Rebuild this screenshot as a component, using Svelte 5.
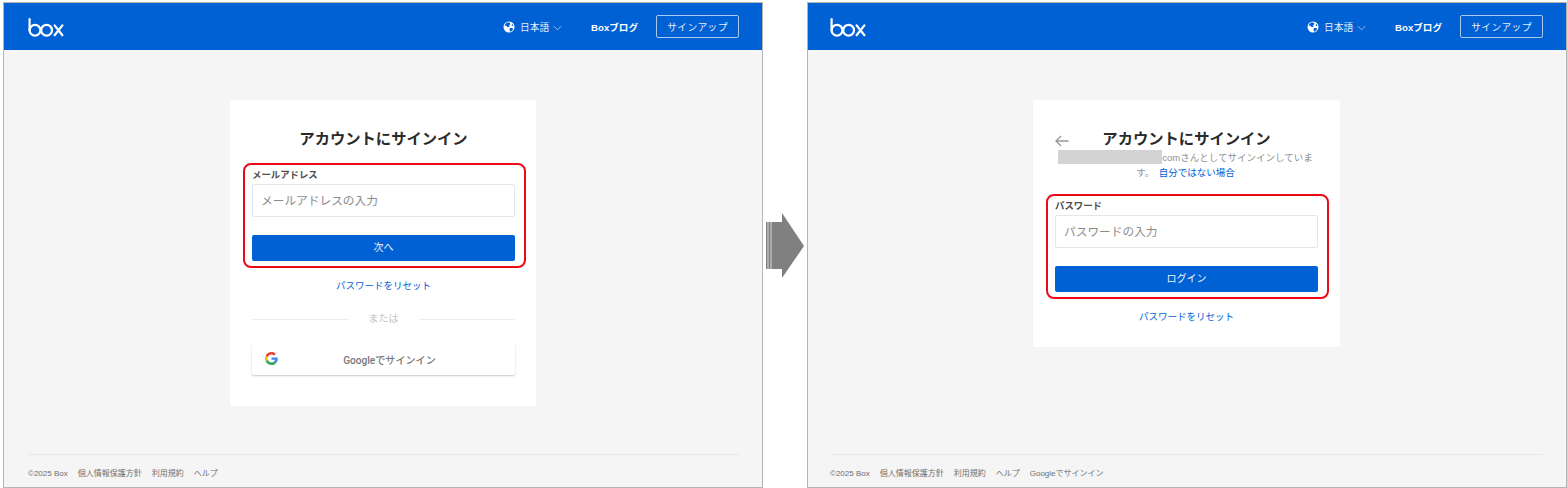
<script>
  const footerBase = ['個人情報保護方針', '利用規約', 'ヘルプ'];
</script>

{#snippet header()}
  <header class="top">
    <svg class="logo" viewBox="0 0 36 19" width="36" height="19" aria-label="box">
      <g fill="none" stroke="#fff" stroke-width="2.2" stroke-linecap="round">
        <path d="M1.6 1.2 V12.4" />
        <circle cx="7" cy="12.2" r="5.4" />
        <circle cx="18.6" cy="12.2" r="5.4" />
        <path d="M26.6 7.4 L34.4 17.2 M34.4 7.4 L26.6 17.2" />
      </g>
    </svg>
    <nav class="top-nav">
      <span class="lang">
        <svg class="globe" viewBox="0 0 24 24" width="12" height="12">
          <circle cx="12" cy="12" r="11" fill="#fff" />
          <path d="M8 3 L13 3 L15 6 L12 9 L13 12 L9 12 L6 9 L3 10 Q4 5 8 3 Z M14 14 L19 14 L20 17 L16 21 L14 21 L13 17 Z M19 6 L21 9 L18 10 L17 8 Z" fill="#0061d5" />
        </svg>
        日本語
        <svg class="chev" viewBox="0 0 10 6" width="9" height="6">
          <path d="M1 1 L5 5 L9 1" fill="none" stroke="#b8d2f2" stroke-width="0.9" />
        </svg>
      </span>
      <span class="blog">Boxブログ</span>
      <span class="signup">サインアップ</span>
    </nav>
  </header>
{/snippet}

{#snippet footer(extra)}
  <footer class="foot">
    <div class="foot-row">
      <span class="copy">©2025 Box</span>
      {#each footerBase as item}
        <span>{item}</span>
      {/each}
      {#if extra}
        <span>{extra}</span>
      {/if}
    </div>
  </footer>
{/snippet}

<div class="page">
  <section class="win">
    {@render header()}
    <main class="stage">
      <div class="card card-tall">
        <h1>アカウントにサインイン</h1>
        <div class="form">
          <span class="mark"></span>
          <label for="mail">メールアドレス</label>
          <input id="mail" type="text" placeholder="メールアドレスの入力" />
          <button class="primary">次へ</button>
        </div>
        <a class="reset" href="#top">パスワードをリセット</a>
        <div class="or"><span>または</span></div>
        <button class="google">
          <svg viewBox="0 0 48 48" width="13" height="13">
            <path fill="#EA4335" d="M24 9.5c3.5 0 6.7 1.2 9.2 3.6l6.9-6.9C35.9 2.4 30.5 0 24 0 14.6 0 6.5 5.4 2.6 13.2l8 6.2C12.5 13.7 17.8 9.5 24 9.5z" />
            <path fill="#4285F4" d="M47 24.5c0-1.6-.1-3.1-.4-4.5H24v9h12.9c-.6 3-2.2 5.5-4.7 7.2l7.7 6c4.5-4.2 7.1-10.3 7.1-17.7z" />
            <path fill="#FBBC05" d="M10.5 28.6c-.5-1.4-.8-3-.8-4.6s.3-3.2.8-4.6l-8-6.2C.9 16.5 0 20.1 0 24s.9 7.500 2.600 10.800l7.900-6.200z" />
            <path fill="#34A853" d="M24 48c6.500 0 11.900-2.100 15.900-5.800l-7.700-6c-2.200 1.400-4.900 2.300-8.200 2.300-6.200 0-11.500-4.200-13.400-9.900l-8 6.200C6.500 42.600 14.600 48 24 48z" />
          </svg>
          <span>Googleでサインイン</span>
        </button>
      </div>
    </main>
    {@render footer()}
  </section>

  <div class="arrow-col">
    <svg viewBox="0 0 38 65" width="38" height="65">
      <path d="M16 0 L38 33 L16 65 L16 56 L0 56 L0 9 L16 9 Z" fill="#808080" />
      <path d="M2 9 V56 M5 9 V56" stroke="#e4e4e4" stroke-width="0.9" />
    </svg>
  </div>

  <section class="win win-second">
    {@render header()}
    <main class="stage">
      <div class="card">
        <div class="title-row">
          <svg class="back" viewBox="0 0 14 12" width="14" height="12">
            <path d="M13.500 6 H1 M6 1 L1 6 L6 11" fill="none" stroke="#999" stroke-width="1.400" />
          </svg>
          <h1>アカウントにサインイン</h1>
        </div>
        <p class="who">
          <span class="hidden-mail"></span><span>comさんとしてサインインしていま</span><br />
          <span>す。</span> <a href="#top">自分ではない場合</a>
        </p>
        <div class="form">
          <span class="mark"></span>
          <label for="pass">パスワード</label>
          <input id="pass" type="text" placeholder="パスワードの入力" />
          <button class="primary">ログイン</button>
        </div>
        <a class="reset" href="#top">パスワードをリセット</a>
      </div>
    </main>
    {@render footer('Googleでサインイン')}
  </section>
</div>

<style>
  :global(body) {
    margin: 0;
    background: #fff;
  }
  .page {
    display: flex;
    align-items: center;
    width: 1567px;
    height: 488px;
    box-sizing: border-box;
    padding: 2px 0 0 3px;
    overflow: hidden;
    font-family: "Liberation Sans", "Noto Sans CJK JP", sans-serif;
  }
  .win {
    flex: none;
    display: flex;
    flex-direction: column;
    width: 760px;
    height: 486px;
    box-sizing: border-box;
    border: 1px solid #b5b5b5;
    background: #f5f5f5;
  }
  .arrow-col {
    flex: none;
    display: flex;
    width: 44px;
    box-sizing: border-box;
    padding-left: 3px;
  }
  .top {
    flex: none;
    display: flex;
    align-items: center;
    justify-content: space-between;
    height: 47px;
    padding: 0 23px 0 24px;
    background: #0061d5;
    color: #fff;
  }
  .win-second .top {
    padding-left: 22px;
  }
  .logo {
    margin-top: 1px;
  }
  .top-nav {
    display: flex;
    align-items: center;
    font-size: 9.700px;
  }
  .lang {
    display: flex;
    align-items: center;
    gap: 5px;
    color: #e6effb;
  }
  .chev {
    margin-left: -1px;
    margin-top: 3px;
  }
  .blog {
    margin-left: 29px;
    font-size: 9.600px;
    font-weight: 700;
  }
  .signup {
    margin-left: 18px;
    width: 83px;
    height: 23px;
    display: flex;
    align-items: center;
    justify-content: center;
    box-sizing: border-box;
    border: 1px solid #a8c8ef;
    border-radius: 2px;
    letter-spacing: 0.4px;
    color: #e6effb;
  }
  .stage {
    flex: 1;
    display: flex;
    justify-content: center;
    align-items: flex-start;
    padding-top: 50px;
  }
  .win-second .stage {
    padding-right: 1px;
  }
  .card {
    width: 306px;
    box-sizing: border-box;
    padding: 30px 21px 23px 22px;
    background: #fff;
    border-radius: 2px;
    display: flex;
    flex-direction: column;
    align-items: stretch;
    text-align: center;
  }
  .win-second .card {
    width: 307px;
    padding-right: 22px;
  }
  .card-tall {
    height: 306px;
  }
  h1 {
    margin: 0;
    font-size: 15.300px;
    line-height: 18px;
    font-weight: 700;
    color: #2a2a2a;
  }
  .title-row {
    position: relative;
    display: flex;
    justify-content: center;
  }
  .back {
    position: absolute;
    left: 0;
    top: 5px;
  }
  .who {
    margin: 2px 2px 0 0;
    font-size: 9.500px;
    line-height: 14.500px;
    color: #909090;
  }
  .who a {
    color: #0061d5;
    text-decoration: none;
    margin-left: 2px;
  }
  .hidden-mail {
    display: inline-block;
    width: 104px;
    height: 14px;
    background: #d3d3d3;
    vertical-align: -3px;
  }
  .form {
    position: relative;
    display: flex;
    flex-direction: column;
    margin-top: 18px;
    text-align: left;
  }
  .win-second .form {
    margin-top: 17px;
  }
  .mark {
    position: absolute;
    left: -9px;
    right: -11px;
    top: -3px;
    height: 105px;
    box-sizing: border-box;
    border: 2px solid #ec0a16;
    border-radius: 8px;
    pointer-events: none;
  }
  label {
    padding-top: 2px;
    font-size: 9.400px;
    line-height: 14px;
    font-weight: 700;
    color: #4e4e4e;
  }
  input {
    margin-top: 2px;
    height: 33px;
    box-sizing: border-box;
    padding: 0 8px;
    border: 1px solid #e6e6e6;
    border-radius: 2px;
    background: #fff;
    font: inherit;
    font-size: 11.700px;
    outline: none;
  }
  input::placeholder {
    color: #8a8a8a;
    opacity: 1;
  }
  .primary {
    margin-top: 18px;
    height: 26px;
    border: none;
    border-radius: 2px;
    background: #0061d5;
    color: #f0f5fc;
    font: inherit;
    font-size: 10px;
    padding: 0 0 3px;
  }
  .reset {
    margin-top: 18px;
    font-size: 9.500px;
    line-height: 14px;
    color: #0061d5;
    text-decoration: none;
  }
  .or {
    display: flex;
    align-items: center;
    gap: 20px;
    margin-top: 19px;
    font-size: 10px;
    line-height: 14px;
    color: #c4c4c4;
  }
  .or::before,
  .or::after {
    content: "";
    flex: 1;
    height: 1px;
    background: #ececec;
  }
  .google {
    position: relative;
    display: flex;
    align-items: center;
    justify-content: center;
    margin-top: 18px;
    height: 31px;
    padding: 0 0 0 12px;
    border: none;
    border-radius: 2px;
    background: #fff;
    box-shadow: 0 1px 2px rgba(0, 0, 0, 0.22);
    font-family: Roboto, "Noto Sans CJK JP", sans-serif;
    font-weight: 500;
    font-size: 10.100px;
    color: #767676;
  }
  .google svg {
    position: absolute;
    left: 13px;
    top: 8px;
  }
  .foot {
    flex: none;
    margin: 0 23px 0 24px;
    height: 32px;
    border-top: 1px solid #e8e8e8;
    display: flex;
    align-items: center;
    font-size: 8px;
    color: #6f6f6f;
  }
  .win-second .foot {
    margin-left: 22px;
  }
  .foot-row {
    display: flex;
    align-items: baseline;
    gap: 10px;
    margin-top: 2px;
  }
</style>
